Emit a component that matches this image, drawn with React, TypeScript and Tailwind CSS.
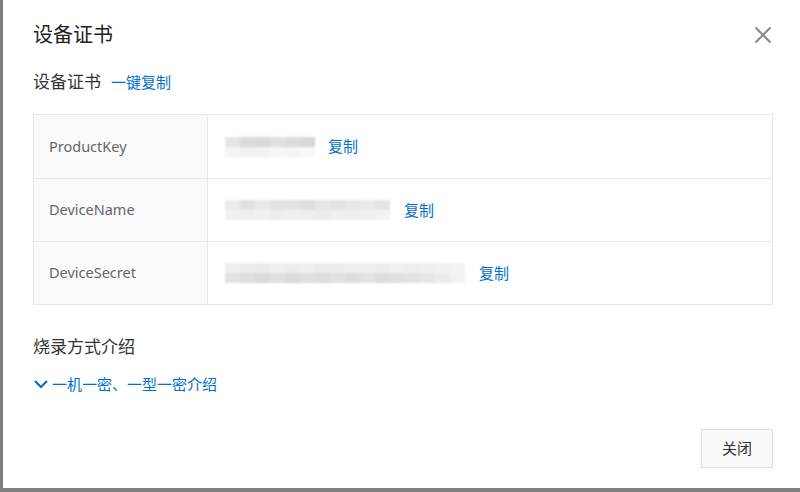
import React from "react";

const fontStack = "font-['Noto_Sans','Noto_Sans_CJK_SC',sans-serif]";

type Row = {
  label: string;
  top: string[];
  bottom: string[];
  gap: string;
};

const rows: Row[] = [
  {
    label: "ProductKey",
    top: ["bg-[#e4e4e4]", "bg-[#dadada]", "bg-[#d9d9d9]", "bg-[#e0e0e0]", "bg-[#dcdcdc]", "bg-[#d7d7d7]"],
    bottom: ["bg-[#f4f4f4]", "bg-[#f2f2f2]", "bg-[#f3f3f3]", "bg-[#f6f6f6]", "bg-[#f4f4f4]", "bg-[#f8f8f8]"],
    gap: "ml-[13px]",
  },
  {
    label: "DeviceName",
    top: ["bg-[#ececec]", "bg-[#e1e1e1]", "bg-[#e9e9e9]", "bg-[#e3e3e3]", "bg-[#e2e2e2]", "bg-[#dedede]", "bg-[#e6e6e6]", "bg-[#e3e3e3]", "bg-[#e7e7e7]", "bg-[#e9e9e9]", "bg-[#e4e4e4]"],
    bottom: ["bg-[#f1f1f1]", "bg-[#eeeeee]", "bg-[#f0f0f0]", "bg-[#ededed]", "bg-[#efefef]", "bg-[#eeeeee]", "bg-[#ececec]", "bg-[#efefef]", "bg-[#eeeeee]", "bg-[#f0f0f0]", "bg-[#f3f3f3]"],
    gap: "ml-[14px]",
  },
  {
    label: "DeviceSecret",
    top: ["bg-[#eeeeee]", "bg-[#ececec]", "bg-[#eaeaea]", "bg-[#efefef]", "bg-[#ededed]", "bg-[#eeeeee]", "bg-[#ebebeb]", "bg-[#ececec]", "bg-[#eeeeee]", "bg-[#efefef]", "bg-[#ededed]", "bg-[#f0f0f0]", "bg-[#eeeeee]", "bg-[#efefef]", "bg-[#f1f1f1]", "bg-[#f3f3f3]"],
    bottom: ["bg-[#e2e2e2]", "bg-[#dedede]", "bg-[#dadada]", "bg-[#e0e0e0]", "bg-[#dbdbdb]", "bg-[#dfdfdf]", "bg-[#dddddd]", "bg-[#e1e1e1]", "bg-[#dcdcdc]", "bg-[#e3e3e3]", "bg-[#dddddd]", "bg-[#dfdfdf]", "bg-[#e2e2e2]", "bg-[#e6e6e6]", "bg-[#ebebeb]", "bg-[#f1f1f1]"],
    gap: "ml-[14px]",
  },
];

const Mosaic: React.FC<{ top: string[]; bottom: string[] }> = ({ top, bottom }) => (
  <div className="flex flex-col">
    <div className="flex">
      {top.map((c, i) => (
        <div key={i} className={`w-[15px] h-[10px] ${c}`} />
      ))}
    </div>
    <div className="flex">
      {bottom.map((c, i) => (
        <div key={i} className={`w-[15px] h-[10px] ${c}`} />
      ))}
    </div>
  </div>
);

const App: React.FC = () => {
  return (
    <div className={`w-[800px] h-[492px] bg-[#7f7f7f] flex ${fontStack}`}>
      <div className="ml-[3px] w-[797px] h-[488px] bg-white flex flex-col pl-[30px] pr-[27px]">
        <div className="flex items-center justify-between pt-[21px]">
          <h1 className="text-[20px] leading-[28px] text-[#222]">设备证书</h1>
          <svg width="18" height="18" viewBox="0 0 18 18" className="mr-[1px]">
            <path d="M1.5 1.5 L16.5 16.5 M16.5 1.5 L1.5 16.5" stroke="#888" strokeWidth="2" />
          </svg>
        </div>

        <div className="flex items-baseline mt-[21px]">
          <h2 className="text-[17px] leading-[24px] text-[#333]">设备证书</h2>
          <span className="ml-[10px] text-[15px] text-[#0070cc]">一键复制</span>
        </div>

        <div className="mt-[20px] border border-[#e8e8e8]">
          {rows.map((row, i) => (
            <div key={row.label} className={`flex h-[63px] ${i > 0 ? "border-t border-[#e8e8e8]" : ""}`}>
              <div className="w-[174px] bg-[#fafafa] border-r border-[#e8e8e8] flex items-center pl-[15px] text-[14.5px] text-[#666]">
                {row.label}
              </div>
              <div className="flex items-center pl-[17px]">
                <div className="blur-[1px]">
                  <Mosaic top={row.top} bottom={row.bottom} />
                </div>
                <span className={`${row.gap} text-[15px] text-[#0070cc]`}>复制</span>
              </div>
            </div>
          ))}
        </div>

        <h2 className="mt-[30px] text-[17px] leading-[24px] text-[#333]">烧录方式介绍</h2>
        <div className="mt-[14px] flex items-center text-[15px] text-[#0070cc]">
          <svg width="16" height="10" viewBox="0 0 16 10" className="mr-[3px]">
            <path d="M2 2 L8 8 L14 2" fill="none" stroke="#0070cc" strokeWidth="2.2" />
          </svg>
          <span>一机一密、一型一密介绍</span>
        </div>

        <div className="mt-auto mb-[20px] flex justify-end">
          <button className="w-[72px] h-[39px] bg-[#f9f9f9] border border-[#dedede] text-[15px] text-[#333]">
            关闭
          </button>
        </div>
      </div>
    </div>
  );
};

export default App;
